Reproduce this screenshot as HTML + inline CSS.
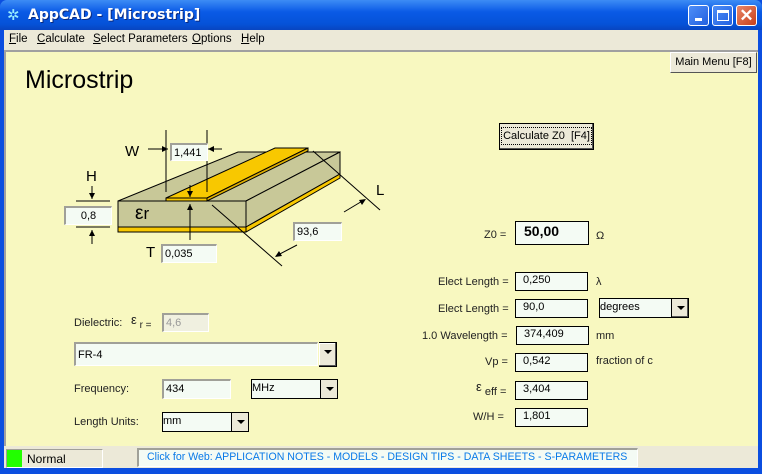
<!DOCTYPE html>
<html><head><meta charset="utf-8"><style>
*{margin:0;padding:0;box-sizing:border-box}
body{width:762px;height:474px;overflow:hidden;position:relative;background:#0b4ee0;font-family:"Liberation Sans",sans-serif;font-size:11px;color:#000}
.a{position:absolute;white-space:nowrap}
.tb{left:0;top:0;width:762px;height:30px;background:linear-gradient(#3d8cf5,#0a5ae6 40%,#0552d8 80%,#0845c0);border-radius:7px 7px 0 0}
.title{left:28px;top:7px;color:#fff;font-weight:bold;font-size:14px;text-shadow:1px 1px #0a2a80;font-family:"DejaVu Sans","Liberation Sans",sans-serif}
.wb{top:5px;width:21px;height:21px;border:1px solid #fff;border-radius:3px;background:linear-gradient(135deg,#4e8ef7,#2360e0)}
.menu{left:4px;top:30px;width:754px;height:20px;background:#ece9d8}
.menu span{position:absolute;top:3px;font-size:11.5px;white-space:nowrap}
.client{left:4px;top:50px;width:754px;height:396px;background:#f8f8c0;border-top:2px solid #a0a0a0;border-left:2px solid #a0a0a0}
.status{left:4px;top:446px;width:754px;height:22px;background:#ece9d8}
.box{position:absolute;background:#f4fbf4;border:1px solid #000;font-size:11px;padding:1px 3px;line-height:15px;white-space:nowrap}
.sunk{position:absolute;background:#f4fbf4;border-top:2px solid #a0a098;border-left:2px solid #a0a098;border-bottom:1px solid #fff;border-right:1px solid #fff;padding:1px 2px;font-size:11px;line-height:14px;white-space:nowrap}
.lbl{position:absolute;font-size:11px;color:#222;white-space:nowrap}
.dd{position:absolute;right:0;top:0;bottom:0;width:17px;background:#ece9d8;border-left:1px solid #000}
.dd:after{content:"";position:absolute;left:5px;top:7px;border-left:4px solid transparent;border-right:4px solid transparent;border-top:4px solid #000}
.btn{position:absolute;background:#ece9d8;border:1px solid;border-color:#fff #555 #555 #fff;font-size:11px;text-align:center;white-space:nowrap}
</style></head><body>
<div class="a tb"></div>
<div class="a" style="left:7px;top:6px;color:#9ef;font-size:15px">✲</div>
<div class="a title">AppCAD - [Microstrip]</div>
<div class="a wb" style="left:688px"><div style="position:absolute;left:6px;top:12px;width:7px;height:3px;background:#fff"></div></div>
<div class="a wb" style="left:712px"><div style="position:absolute;left:4px;top:4px;width:12px;height:11px;border:1px solid #fff;border-top:3px solid #fff"></div></div>
<div class="a wb" style="left:736px;background:linear-gradient(135deg,#e8876a,#c8401a);color:#fff;font-size:17px;font-weight:bold;text-align:center;line-height:19px">✕</div>
<div class="a menu"><span style="left:5px"><u>F</u>ile</span><span style="left:33px"><u>C</u>alculate</span><span style="left:89px"><u>S</u>elect Parameters</span><span style="left:188px"><u>O</u>ptions</span><span style="left:237px"><u>H</u>elp</span></div>
<div class="a client"></div>
<div class="a" style="left:25px;top:66px;font-size:25px">Microstrip</div>
<div class="btn" style="left:670px;top:52px;width:87px;height:21px;line-height:19px">Main Menu [F8]</div>
<div class="btn" style="left:499px;top:123px;width:95px;height:27px;border:1px solid #000;line-height:25px;box-shadow:inset -1px -1px #555"><span style="border:1px dotted #000;padding:2px 1px">Calculate Z0&nbsp; [F4]</span></div>

<svg class="a" style="left:0;top:0" width="762" height="474">
<g stroke="#000" stroke-width="1">
<polygon points="118,201 238,152 340,152 246,201" fill="#c8c898"/>
<polygon points="246,201 340,152 340,174 246,227" fill="#c8c898"/>
<polygon points="246,227 340,174 340,178 246,232" fill="#f8c800"/>
<rect x="118" y="201" width="128" height="26" fill="#c8c898"/>
<rect x="118" y="227" width="128" height="5" fill="#f8c800"/>
<polygon points="166,198 275,148 308,148 207,198" fill="#f8c800"/>
<polygon points="207,198 308,148 308,151 207,201" fill="#e0b000"/>
<rect x="166" y="198" width="41" height="3" fill="#f8c800"/>
<line x1="166" y1="130" x2="166" y2="192"/><line x1="207" y1="130" x2="207" y2="192"/>
<line x1="148" y1="149" x2="168" y2="149"/><line x1="208" y1="149" x2="222" y2="149"/>
<line x1="76" y1="201" x2="110" y2="201"/><line x1="76" y1="227" x2="110" y2="227"/>
<line x1="92" y1="186" x2="92" y2="199"/><line x1="92" y1="230" x2="92" y2="244"/>
<line x1="190" y1="185" x2="190" y2="197"/><line x1="190" y1="204" x2="190" y2="240"/>
<line x1="313" y1="151" x2="380" y2="210"/><line x1="212" y1="205" x2="282" y2="266"/>
<line x1="344" y1="212" x2="364" y2="200"/><line x1="276" y1="256" x2="297" y2="245"/>
</g>
<g fill="#000"><path d="M168,149 l-6,-3 v6z"/><path d="M208,149 l6,-3 v6z"/><path d="M92,199 l-3,-6 h6z"/><path d="M92,230 l-3,6 h6z"/><path d="M190,197 l-3,-6 h6z"/><path d="M190,204 l-3,6 h6z"/><path d="M366,199 l-7,1 3,5z"/><path d="M275,257 l7,-1 -3,-5z"/></g>
</svg>
<div class="a" style="left:125px;top:143px;font-size:15px">W</div>
<div class="a" style="left:86px;top:168px;font-size:15px">H</div>
<div class="a" style="left:146px;top:244px;font-size:15px">T</div>
<div class="a" style="left:376px;top:182px;font-size:15px">L</div>
<div class="a" style="left:135px;top:203px;font-size:19px">ε<span style="font-size:17px">r</span></div>
<div class="sunk" style="left:170px;top:143px;width:38px;height:18px">1,441</div>
<div class="sunk" style="left:64px;top:206px;width:48px;height:19px;text-align:center">0,8</div>
<div class="sunk" style="left:161px;top:244px;width:56px;height:19px">0,035</div>
<div class="sunk" style="left:293px;top:222px;width:49px;height:19px">93,6</div>

<div class="lbl" style="left:74px;top:317px">Dielectric:</div>
<div class="lbl" style="left:131px;top:312px;font-size:13px">ε<span style="font-size:10px;position:relative;top:4px"> r =</span></div>
<div class="sunk" style="left:162px;top:313px;width:47px;height:19px;color:#999;background:#f0f0e0">4,6</div>
<div class="sunk" style="left:74px;top:342px;width:244px;height:24px;padding-top:4px">FR-4</div>
<div class="box" style="left:319px;top:342px;width:18px;height:25px;padding:0"><div class="dd" style="width:17px;border:0;box-shadow:inset -1px -1px #555,inset 1px 1px #fff"></div></div>
<div class="lbl" style="left:74px;top:383px">Frequency:</div>
<div class="sunk" style="left:162px;top:379px;width:69px;height:20px">434</div>
<div class="box" style="left:251px;top:379px;width:87px;height:20px;padding:1px 0">MHz<div class="dd"></div></div>
<div class="lbl" style="left:74px;top:416px">Length Units:</div>
<div class="box" style="left:162px;top:412px;width:87px;height:20px;padding:1px 0">mm<div class="dd"></div></div>

<div class="lbl" style="left:484px;top:229px">Z0 =</div>
<div class="box" style="left:515px;top:221px;width:74px;height:24px;font-weight:bold;font-size:14px;padding:0 8px;line-height:18px">50,00</div>
<div class="lbl" style="left:596px;top:230px">Ω</div>
<div class="lbl" style="left:438px;top:276px">Elect Length =</div>
<div class="box" style="left:515px;top:272px;width:73px;height:19px;padding:0 7px">0,250</div>
<div class="lbl" style="left:596px;top:276px">λ</div>
<div class="lbl" style="left:438px;top:303px">Elect Length =</div>
<div class="box" style="left:515px;top:299px;width:73px;height:19px;padding:0 7px">90,0</div>
<div class="box" style="left:599px;top:298px;width:90px;height:20px;padding:1px 0">degrees<div class="dd" style="box-shadow:inset -1px -1px #555"></div></div>
<div class="lbl" style="left:422px;top:330px">1.0 Wavelength =</div>
<div class="box" style="left:516px;top:326px;width:73px;height:19px;padding:0 7px">374,409</div>
<div class="lbl" style="left:596px;top:330px">mm</div>
<div class="lbl" style="left:485px;top:356px">Vp =</div>
<div class="box" style="left:515px;top:353px;width:73px;height:19px;padding:0 7px">0,542</div>
<div class="lbl" style="left:596px;top:355px">fraction of c</div>
<div class="lbl" style="left:476px;top:379px;font-size:13px">ε<span style="font-size:11px;position:relative;top:4px"> eff =</span></div>
<div class="box" style="left:515px;top:381px;width:73px;height:19px;padding:0 7px">3,404</div>
<div class="lbl" style="left:473px;top:411px">W/H =</div>
<div class="box" style="left:515px;top:408px;width:73px;height:19px;padding:0 7px">1,801</div>

<div class="a status"></div>
<div class="a" style="left:6px;top:449px;width:97px;height:19px;border:1px solid;border-color:#a0a098 #fff #fff #a0a098"></div>
<div class="a" style="left:7px;top:450px;width:15px;height:17px;background:#22ff00"></div>
<div class="a" style="left:27px;top:452px;font-size:12px">Normal</div>
<div class="a" style="left:137px;top:448px;width:501px;height:19px;background:#f4fbf4;border-top:2px solid #a0a098;border-left:2px solid #a0a098;border-bottom:1px solid #fff;border-right:1px solid #fff;color:#0a7ae8;font-size:10.6px;padding-left:8px;line-height:14px;overflow:hidden">Click for Web: APPLICATION NOTES - MODELS - DESIGN TIPS - DATA SHEETS - S-PARAMETERS</div>
</body></html>
